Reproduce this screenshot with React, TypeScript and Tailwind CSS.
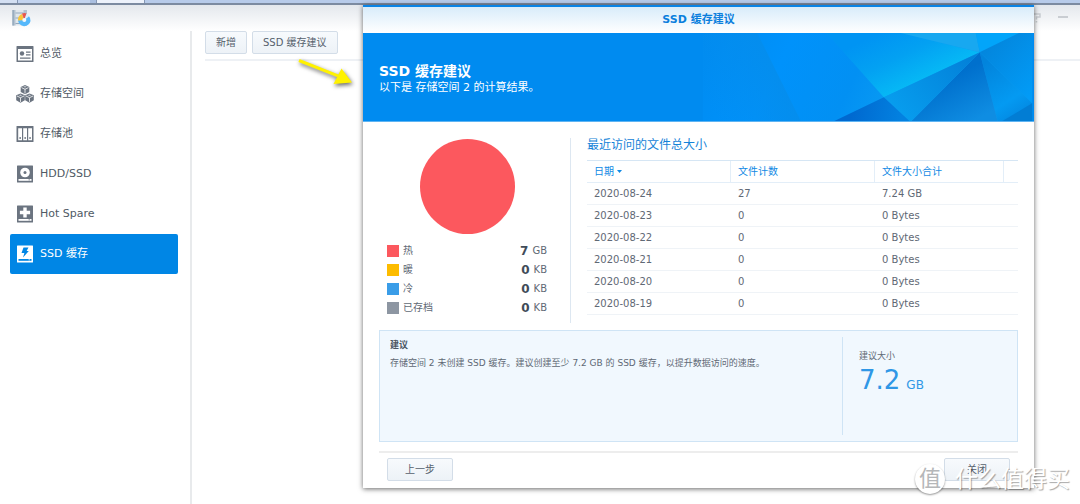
import React from 'react'

type NavItem = {
    label: string
    icon: React.ReactNode
    active?: boolean
}

const OverviewIcon = () => (
    <svg width="18" height="18" viewBox="0 0 18 18" fill="currentColor">
        <path
            fillRule="evenodd"
            d="M1 1h16a.5.5 0 0 1 .5.5v15a.5.5 0 0 1-.5.5H1a.5.5 0 0 1-.5-.5v-15A.5.5 0 0 1 1 1Zm1 3v11.5h14V4Z"
        />
        <circle cx="6" cy="8.5" r="2.2" />
        <path d="M10 6.500h4.500v1.300H10zM10 9.200h4.500v1.300H10zM4 12.400h10.500v1.300H4z" />
    </svg>
)

const Cube = ({ x, y }: { x: number; y: number }) => (
    <g transform={`translate(${x} ${y})`}>
        <path d="M4.500 0 8.800 1.900v5L4.500 9.300.200 6.900v-5Z" fill="currentColor" />
        <path
            d="M1 2.600 4.500 4.300 8 2.600M4.500 4.300v4.200"
            fill="none"
            stroke="#fff"
            strokeWidth=".8"
        />
        <path d="m4.500 1 1.800.8-1.800.8-1.800-.8Z" fill="#c5c9cf" />
    </g>
)

const VolumeIcon = () => (
    <svg width="18" height="18" viewBox="0 0 18 18">
        <Cube x={4.5} y={0} />
        <Cube x={0} y={8.4} />
        <Cube x={9} y={8.4} />
    </svg>
)

const PoolIcon = () => (
    <svg width="18" height="18" viewBox="0 0 18 18">
        <rect x=".5" y="1" width="17" height="16" rx=".5" fill="currentColor" />
        <path d="M2.200 3.200h3.800v12H2.200zM7.200 3.200h3.800v12H7.200zM12.200 3.200H16v12h-3.800z" fill="#fff" />
        <path d="M3.500 12h1.300v2H3.500zM8.500 12h1.300v2H8.500zM13.400 12h1.300v2h-1.300z" fill="currentColor" />
    </svg>
)

const DriveIcon = ({ children, inner }: { children: React.ReactNode; inner: string }) => (
    <svg width="18" height="18" viewBox="0 0 18 18">
        <rect x="1" y=".5" width="16" height="17" rx=".5" fill="currentColor" />
        {children}
        <path d="M2.500 14h13v1.800h-13z" fill={inner} />
        <path d="M12.500 14.500h1.500v.8h-1.500z" fill="currentColor" />
    </svg>
)

const navItems: NavItem[] = [
    { label: '总览', icon: <OverviewIcon /> },
    { label: '存储空间', icon: <VolumeIcon /> },
    { label: '存储池', icon: <PoolIcon /> },
    {
        label: 'HDD/SSD',
        icon: (
            <DriveIcon inner="#fff">
                <circle cx="9" cy="7.500" r="4.800" fill="#fff" />
                <circle cx="9" cy="7.500" r="1.500" fill="currentColor" />
            </DriveIcon>
        ),
    },
    {
        label: 'Hot Spare',
        icon: (
            <DriveIcon inner="#fff">
                <path d="M7.300 2.500h3.400v3.300h3.400v3.400h-3.400v3.300H7.300V9.200H3.900V5.800h3.400Z" fill="#fff" />
            </DriveIcon>
        ),
    },
    {
        label: 'SSD 缓存',
        active: true,
        icon: (
            <DriveIcon inner="#0086e5">
                <path d="M7.500 2.500h5L10.600 6h2.200L7 12.500 8.400 8H5.500Z" fill="#0086e5" />
            </DriveIcon>
        ),
    },
]

const legend = [
    { label: '热', value: 7, unit: 'GB', color: 'bg-[#fc585e]' },
    { label: '暖', value: 0, unit: 'KB', color: 'bg-[#fdbc00]' },
    { label: '冷', value: 0, unit: 'KB', color: 'bg-[#3a9de8]' },
    { label: '已存档', value: 0, unit: 'KB', color: 'bg-[#8d96a2]' },
]

const rows = [
    { date: '2020-08-24', count: 27, size: '7.24 GB' },
    { date: '2020-08-23', count: 0, size: '0 Bytes' },
    { date: '2020-08-22', count: 0, size: '0 Bytes' },
    { date: '2020-08-21', count: 0, size: '0 Bytes' },
    { date: '2020-08-20', count: 0, size: '0 Bytes' },
    { date: '2020-08-19', count: 0, size: '0 Bytes' },
]

const Button = ({ children, className = '' }: { children: React.ReactNode; className?: string }) => (
    <button
        type="button"
        className={`h-[23px] rounded-[2px] border border-[#d3dde8] bg-linear-to-b from-[#f7fafd] to-[#edf2f7] text-[10px] text-[#56616d] ${className}`}
    >
        {children}
    </button>
)

const TaskStrip = () => (
    <div className="flex h-[5px] border-b-2 border-[#7c8ba1] bg-[#b7cbea]">
        <div className="w-[18px] border-r border-[#8496b3] bg-[#d3dff2]" />
        <div className="w-[72px] bg-[#c3d4ef]" />
        <div className="w-[7px] border-r border-[#8496b3] bg-[#aabfe0]" />
        <div className="w-12 border-r border-[#8496b3] bg-[#edf2fb]" />
    </div>
)

const AppLogo = () => (
    <svg width="19" height="18" viewBox="0 0 19 18">
        <path d="M0 1h15v15.500H0z" fill="#dfe6ec" />
        <path d="M0 1h3.500v15.500H0zM11.500 1H15v15.500h-3.500z" fill="#b3c2d0" />
        <path d="M.8 1h1v15.500h-1zM3.500 3.500h8v1h-8zM3.500 8.500h8v1h-8zM3.500 14h8v1h-8z" fill="#93a8bc" />
        <path d="M12.300 11 6 11.200a6.300 6.300 0 0 0 12.500.8 6.300 6.300 0 0 0-1.700-5Z" fill="#55b8fb" />
        <path d="M12.300 11 6 11.500a6.300 6.300 0 0 1 4-6.400Z" fill="#f9c63a" />
        <path d="M12.300 11 10 4.600a6.600 6.600 0 0 1 4.500-.2Z" fill="#e8564f" />
        <path d="m12.300 11 2.200-6.200A6.300 6.300 0 0 1 17 7.200Z" fill="#d9eefc" />
        <circle cx="12.300" cy="11" r="2" fill="#f3f8fc" />
    </svg>
)

const BannerArt = () => (
    <svg className="absolute top-0 right-0 h-full" width="333" height="89" viewBox="0 0 333 89">
        <defs>
            <linearGradient id="fade" x1="0" y1="0" x2="190" y2="89" gradientUnits="userSpaceOnUse">
                <stop offset="0" stopColor="#008bf0" />
                <stop offset=".4" stopColor="#0092fb" />
                <stop offset=".75" stopColor="#0290f3" />
                <stop offset="1" stopColor="#0a9cf2" />
            </linearGradient>
            <linearGradient id="dim" x1="0" y1="60" x2="80" y2="20" gradientUnits="userSpaceOnUse">
                <stop offset="0" stopColor="#058dec" stopOpacity="0" />
                <stop offset="1" stopColor="#058dec" />
            </linearGradient>
            <linearGradient id="glow" x1="226" y1="45" x2="200" y2="-10" gradientUnits="userSpaceOnUse">
                <stop offset="0" stopColor="#06b8f5" />
                <stop offset=".5" stopColor="#03a1f2" />
                <stop offset="1" stopColor="#0094f3" />
            </linearGradient>
            <linearGradient id="wing" x1="200" y1="85" x2="270" y2="25" gradientUnits="userSpaceOnUse">
                <stop offset="0" stopColor="#079dee" />
                <stop offset="1" stopColor="#0381d9" />
            </linearGradient>
            <linearGradient id="deep" x1="245" y1="48" x2="268" y2="92" gradientUnits="userSpaceOnUse">
                <stop offset="0" stopColor="#0070cd" />
                <stop offset="1" stopColor="#0f8de2" />
            </linearGradient>
            <linearGradient id="base" x1="150" y1="80" x2="200" y2="89" gradientUnits="userSpaceOnUse">
                <stop offset="0" stopColor="#0069d0" />
                <stop offset="1" stopColor="#0381e0" />
            </linearGradient>
            <linearGradient id="side" x1="285" y1="15" x2="333" y2="60" gradientUnits="userSpaceOnUse">
                <stop offset="0" stopColor="#0386dd" />
                <stop offset="1" stopColor="#029bf6" />
            </linearGradient>
            <linearGradient id="tail" x1="285" y1="30" x2="320" y2="85" gradientUnits="userSpaceOnUse">
                <stop offset="0" stopColor="#0284dc" />
                <stop offset=".7" stopColor="#049af2" />
                <stop offset="1" stopColor="#0389e2" />
            </linearGradient>
        </defs>
        <path d="M0 0h333v89H0z" fill="url(#fade)" />
        <path d="M0 0h55l44 89H0Z" fill="url(#dim)" />
        <path d="M125 0h75l80 19.500L183 65Z" fill="url(#glow)" />
        <path d="m200 0 80 19.500L276 0Z" fill="#18a8f0" />
        <path d="M276 0h44l-40 19.500Z" fill="#02a5fa" />
        <path d="M320 0h13v71l-53-51.500Z" fill="url(#side)" />
        <path d="m280 19.500 53 51.500v18h-35Z" fill="url(#tail)" />
        <path d="m280 19.500 18 69.500h-87Z" fill="url(#deep)" />
        <path d="M280 19.500 211 89h-2l-26-24Z" fill="url(#wing)" />
        <path d="m183 65 26 24h-76Z" fill="url(#base)" />
        <path d="m303 89 30-18v18Z" fill="#027dd4" />
    </svg>
)

const Legend = () => (
    <ul className="mt-[7px] px-2">
        {legend.map((item) => (
            <li key={item.label} className="flex h-[19px] items-center text-[10px] text-[#5f6975]">
                <span className={`size-3 ${item.color}`} />
                <span className="ml-1">{item.label}</span>
                <span className="ml-auto text-[12px] font-bold text-[#414c59]">{item.value}</span>
                <span className="ml-1">{item.unit}</span>
            </li>
        ))}
    </ul>
)

const FileTable = () => (
    <table className="mt-2 w-full table-fixed border-separate border-spacing-0 border-t border-[#d6e6f4] text-left text-[10px] leading-4">
        <colgroup>
            <col className="w-[144px]" />
            <col className="w-[144px]" />
            <col />
            <col className="w-[14px]" />
        </colgroup>
        <thead className="text-[#1089e4]">
            <tr>
                <th className="h-[22px] border-r border-b border-[#e3eef8] px-[7px] font-normal">
                    日期
                    <svg className="ml-[3px] inline" width="5" height="3" viewBox="0 0 5 3">
                        <path d="M0 0h5L2.500 3Z" fill="currentColor" />
                    </svg>
                </th>
                <th className="border-r border-b border-[#e3eef8] px-[7px] font-normal">文件计数</th>
                <th className="border-r border-b border-[#e3eef8] px-[7px] font-normal">文件大小合计</th>
                <td className="border-b border-[#e3eef8]" />
            </tr>
        </thead>
        <tbody className="text-[#5f6975]">
            {rows.map((row) => (
                <tr key={row.date}>
                    <td className="h-[22px] border-b border-[#eff3f7] px-[7px]">{row.date}</td>
                    <td className="border-b border-[#eff3f7] px-[7px]">{row.count}</td>
                    <td className="border-b border-[#eff3f7] px-[7px]">{row.size}</td>
                    <td className="border-b border-[#eff3f7]" />
                </tr>
            ))}
        </tbody>
    </table>
)

const AdviceDialog = () => (
    <div
        role="dialog"
        aria-labelledby="advice-title"
        className="absolute top-[5px] right-[46px] left-[363px] border-t-2 border-[#0a84e6] bg-white shadow-[0_1px_5px_rgba(0,0,0,0.6)]"
    >
        <div className="flex h-[26px] items-center justify-center bg-linear-to-b from-[#d8ecfa] to-white">
            <h2 id="advice-title" className="text-[11px] font-bold text-[#0b7fdd]">
                SSD 缓存建议
            </h2>
        </div>
        <div className="relative flex h-[89px] flex-col justify-center overflow-hidden border-b border-[#5fb4f2] bg-[#008bf0] px-4 pt-1 text-white">
            <BannerArt />
            <p className="relative text-[14px] leading-[17px] font-bold">SSD 缓存建议</p>
            <p className="relative text-[11px] leading-4">以下是 存储空间 2 的计算结果。</p>
        </div>

        <div className="px-4 pt-4">
            <div className="flex h-[185px]">
                <div className="w-[192px] shrink-0 border-r border-[#dde7f1] pr-[15px]">
                    <svg className="mx-auto" width="95" height="96" viewBox="0 0 95 96">
                        <circle cx="47.500" cy="48.500" r="47.500" fill="#fc585e" />
                    </svg>
                    <Legend />
                </div>
                <div className="grow pl-4">
                    <h3 className="text-[12px] leading-[14px] text-[#1583d8]">最近访问的文件总大小</h3>
                    <FileTable />
                </div>
            </div>

            <div className="mt-[7px] flex h-28 border border-[#cfe4f5] bg-[#f1f8fe] py-[6px] text-[9px] text-[#5f6975]">
                <div className="grow px-[10px]">
                    <h3 className="leading-4 font-bold text-[#4a5562]">建议</h3>
                    <p className="mt-[2px] leading-4">
                        存储空间 2 未创建 SSD 缓存。建议创建至少 7.2 GB 的 SSD 缓存，以提升数据访问的速度。
                    </p>
                </div>
                <div className="w-[175px] shrink-0 border-l border-[#cfe4f5] px-4 pt-[11px]">
                    <p className="leading-4">建议大小</p>
                    <p className="text-[26px] leading-8 text-[#2f97e6]">
                        7.2<span className="ml-[6px] text-[12px]">GB</span>
                    </p>
                </div>
            </div>

            <div className="mt-[9px] flex justify-between border-t-2 border-[#ededed] px-2 pt-[5px] pb-[7px]">
                <Button className="w-[66px]">上一步</Button>
                <Button className="w-[66px]">关闭</Button>
            </div>
        </div>
    </div>
)

const Arrow = () => (
    <svg
        className="absolute top-[56px] left-[294px] drop-shadow-[1px_2px_2px_rgba(0,0,0,0.6)]"
        width="62"
        height="32"
        viewBox="0 0 62 32"
    >
        <path d="M5 4.500 44 19.800" stroke="#fff200" strokeWidth="3" />
        <path d="m47.500 12.500 10.500 14-18.500 1.500Z" fill="#fff200" />
    </svg>
)

const Watermark = () => (
    <div className="pointer-events-none absolute right-[10px] bottom-[9px] flex items-center gap-[10px] text-white">
        <span className="flex size-[30px] items-center justify-center rounded-full bg-white text-[22px] leading-none text-[#b5b7b9] shadow-[0_1px_2px_rgba(0,0,0,0.4)]">
            值
        </span>
        <span className="text-[23px] leading-8 [text-shadow:1px_1px_1px_rgba(0,0,0,0.35)]">
            什么值得买
        </span>
    </div>
)

const App = () => {
    return (
        <div className="relative flex min-h-screen flex-col overflow-hidden bg-white font-['DejaVu_Sans','Noto_Sans_CJK_SC',sans-serif]">
            <TaskStrip />
            <header className="flex h-[26px] items-center justify-between bg-linear-to-b from-[#e4e8ed] to-white px-3">
                <AppLogo />
                <div className="flex gap-4 text-[#c9cdd2]">
                    <button type="button" aria-label="help">
                        <svg width="10" height="10" viewBox="0 0 10 10" fill="none" stroke="currentColor" strokeWidth="1.500">
                            <path d="M1 1h7v3H4.500v2.500M4.500 8v1.500" />
                        </svg>
                    </button>
                    <button type="button" aria-label="minimize">
                        <svg width="10" height="10" viewBox="0 0 10 10">
                            <path d="M0 3h10v2H0z" fill="currentColor" />
                        </svg>
                    </button>
                </div>
            </header>
            <div className="flex grow">
                <nav className="w-[192px] shrink-0 border-r-2 border-[#e8eaec] pt-[3px] pr-3 pl-[10px]">
                    {navItems.map((item) => (
                        <a
                            key={item.label}
                            href="#"
                            className={`flex h-10 items-center gap-[6px] rounded-[2px] px-[6px] text-[11px] ${
                                item.active ? 'bg-[#0086e5] text-white' : 'text-[#6b7480]'
                            }`}
                        >
                            {item.icon}
                            <span className={item.active ? 'text-white' : 'text-[#505a65]'}>{item.label}</span>
                        </a>
                    ))}
                </nav>
                <main className="grow pl-[13px]">
                    <div className="flex gap-[5px] border-b-2 border-[#eef1f5] pb-[5px]">
                        <Button className="px-[10px]">新增</Button>
                        <Button className="px-[10px]">SSD 缓存建议</Button>
                    </div>
                </main>
            </div>
            <Arrow />
            <AdviceDialog />
            <Watermark />
        </div>
    )
}

export default App
